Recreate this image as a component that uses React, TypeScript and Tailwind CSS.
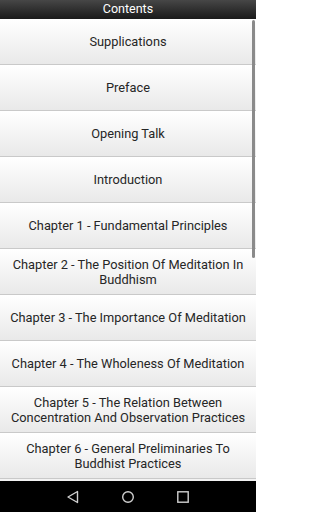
import React from 'react';

const chapters = [
  'Supplications',
  'Preface',
  'Opening Talk',
  'Introduction',
  'Chapter 1 - Fundamental Principles',
  'Chapter 2 - The Position Of Meditation In Buddhism',
  'Chapter 3 - The Importance Of Meditation',
  'Chapter 4 - The Wholeness Of Meditation',
  'Chapter 5 - The Relation Between Concentration And Observation Practices',
  'Chapter 6 - General Preliminaries To Buddhist Practices',
];

const App: React.FC = () => {
  return (
    <div className="w-[256px] h-[512px] flex flex-col bg-black overflow-hidden font-['Roboto',sans-serif]">
      {/* Header */}
      <header className="h-[19px] flex items-center justify-center bg-gradient-to-b from-[#474747] to-[#1a1a1a] text-white text-[12.5px] leading-none">
        Contents
      </header>

      {/* List */}
      <div className="relative flex-1 flex flex-col bg-white">
        {chapters.map((title) => (
          <div
            key={title}
            className="h-[46px] shrink-0 flex items-center justify-center px-2 text-center text-[12.8px] leading-[15px] text-[#262626] bg-gradient-to-b from-white to-[#e9e9e9] border-b border-[#c9c9c9]"
          >
            {title}
          </div>
        ))}
        <div className="h-[2px] bg-[#f2f2f2]" />

        {/* Scrollbar */}
        <div className="absolute right-[1px] top-[1px] w-[3px] h-[238px] bg-[#8a8a8a] rounded-sm" />
      </div>

      {/* Navigation bar */}
      <nav className="h-[31px] shrink-0 flex items-center justify-center gap-[41px] bg-black">
        <svg width="14" height="14" viewBox="0 0 14 14" fill="none" stroke="#d0d0d0" strokeWidth="1.4" strokeLinejoin="round">
          <path d="M11.5 1.5 L11.5 12.5 L2 7 Z" />
        </svg>
        <svg width="14" height="14" viewBox="0 0 14 14" fill="none" stroke="#d0d0d0" strokeWidth="1.4">
          <circle cx="7" cy="7" r="5.3" />
        </svg>
        <svg width="14" height="14" viewBox="0 0 14 14" fill="none" stroke="#d0d0d0" strokeWidth="1.4">
          <rect x="1.8" y="1.8" width="10.4" height="10.4" />
        </svg>
      </nav>
    </div>
  );
};

export default App;
